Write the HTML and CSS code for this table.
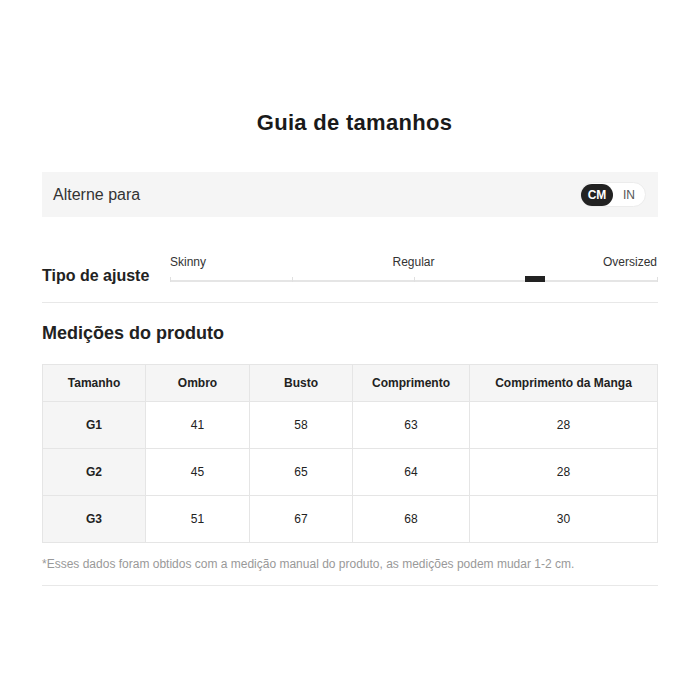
FILE: index.html
```html
<!DOCTYPE html>
<html lang="pt">
<head>
<meta charset="utf-8">
<link rel="stylesheet" href="styles.css">
</head>
<body>
<div class="guide">
  <h1 class="title">Guia de tamanhos</h1>
  <div class="switch-bar">
    <span class="switch-label">Alterne para</span>
    <div class="unit-toggle">
      <span class="unit active">CM</span>
      <span class="unit">IN</span>
    </div>
  </div>
  <div class="fit">
    <div class="fit-title">Tipo de ajuste</div>
    <div class="fit-scale">
      <div class="fit-labels">
        <span>Skinny</span>
        <span>Regular</span>
        <span>Oversized</span>
      </div>
      <div class="fit-track">
        <span class="tick t0"></span>
        <span class="tick t1"></span>
        <span class="tick t2"></span>
        <span class="tick t3"></span>
        <span class="tick t4"></span>
        <span class="marker"></span>
      </div>
    </div>
  </div>
  <h2 class="section-title">Medições do produto</h2>
  <table class="size-table">
    <colgroup>
      <col class="c1"><col class="c2"><col class="c3"><col class="c4"><col>
    </colgroup>
    <thead>
      <tr><th>Tamanho</th><th>Ombro</th><th>Busto</th><th>Comprimento</th><th>Comprimento da Manga</th></tr>
    </thead>
    <tbody>
      <tr><th>G1</th><td>41</td><td>58</td><td>63</td><td>28</td></tr>
      <tr><th>G2</th><td>45</td><td>65</td><td>64</td><td>28</td></tr>
      <tr><th>G3</th><td>51</td><td>67</td><td>68</td><td>30</td></tr>
    </tbody>
  </table>
  <p class="note">*Esses dados foram obtidos com a medição manual do produto, as medições podem mudar 1-2 cm.</p>
</div>
</body>
</html>
```

FILE: styles.css
```css
* { box-sizing: border-box; }
body {
  margin: 0;
  background: #fff;
  font-family: "Liberation Sans", Arial, sans-serif;
  color: #222;
}
.guide {
  width: 616px;
  margin: 0 0 0 42px;
  padding-top: 110px;
}
.title {
  margin: 0;
  padding-left: 9px;
  text-align: center;
  font-size: 22px;
  letter-spacing: 0.3px;
  font-weight: bold;
  color: #1a1a1a;
  line-height: 26px;
}
.switch-bar {
  margin-top: 36px;
  height: 45px;
  background: #f5f5f5;
  display: flex;
  align-items: center;
  justify-content: space-between;
  padding: 0 12px 0 11px;
}
.switch-label {
  font-size: 16px;
  color: #333;
}
.unit-toggle {
  display: flex;
  align-items: center;
  background: #fff;
  border: 1px solid #ececec;
  border-radius: 13px;
  padding: 0;
  height: 25px;
}
.unit {
  width: 32px;
  text-align: center;
  font-size: 12px;
  height: 22px;
  line-height: 22px;
  color: #555;
  border-radius: 11px;
}
.unit.active {
  background: #222;
  color: #fff;
  font-weight: bold;
}
.fit {
  margin-top: 36px;
  display: flex;
  align-items: flex-end;
  border-bottom: 1px solid #e8e8e8;
  padding-bottom: 20px;
}
.fit-title {
  width: 128px;
  font-size: 16px;
  font-weight: bold;
  color: #222;
  line-height: 20px;
  margin-bottom: -4px;
}
.fit-scale {
  flex: 1;
}
.fit-labels {
  display: flex;
  justify-content: space-between;
  font-size: 12px;
  color: #333;
  line-height: 14px;
  padding-top: 2px;
  padding-right: 1px;
}
.fit-labels span:nth-child(2) { margin-left: 18px; }
.fit-track {
  position: relative;
  margin-top: 11px;
  height: 2px;
  background: #e5e5e5;
}
.tick {
  position: absolute;
  bottom: 0;
  width: 1px;
  height: 5px;
  background: #e0e0e0;
}
.t0 { left: 0; }
.t1 { left: 25%; }
.t2 { left: 50%; }
.t3 { left: 75%; }
.t4 { right: 0; }
.marker {
  position: absolute;
  left: 355px;
  bottom: 0;
  width: 20px;
  height: 6px;
  background: #222;
}
.section-title {
  margin: 19px 0 0;
  font-size: 18px;
  font-weight: bold;
  color: #222;
  line-height: 22px;
}
.size-table {
  margin-top: 20px;
  width: 616px;
  border-collapse: collapse;
  table-layout: fixed;
  font-size: 12px;
}
.c1 { width: 103px; }
.c2 { width: 104px; }
.c3 { width: 103px; }
.c4 { width: 117px; }
.size-table th, .size-table td {
  border: 1px solid #e5e5e5;
  text-align: center;
  color: #222;
}
.size-table thead th {
  height: 37px;
  background: #f5f5f5;
  font-weight: bold;
}
.size-table tbody th {
  background: #f5f5f5;
  font-weight: bold;
}
.size-table tbody th, .size-table tbody td {
  height: 47px;
}
.size-table td { font-weight: normal; }
.note {
  margin: 13px 0 0;
  font-size: 12px;
  color: #999;
  line-height: 16px;
  padding-bottom: 13px;
  border-bottom: 1px solid #e8e8e8;
}
```
